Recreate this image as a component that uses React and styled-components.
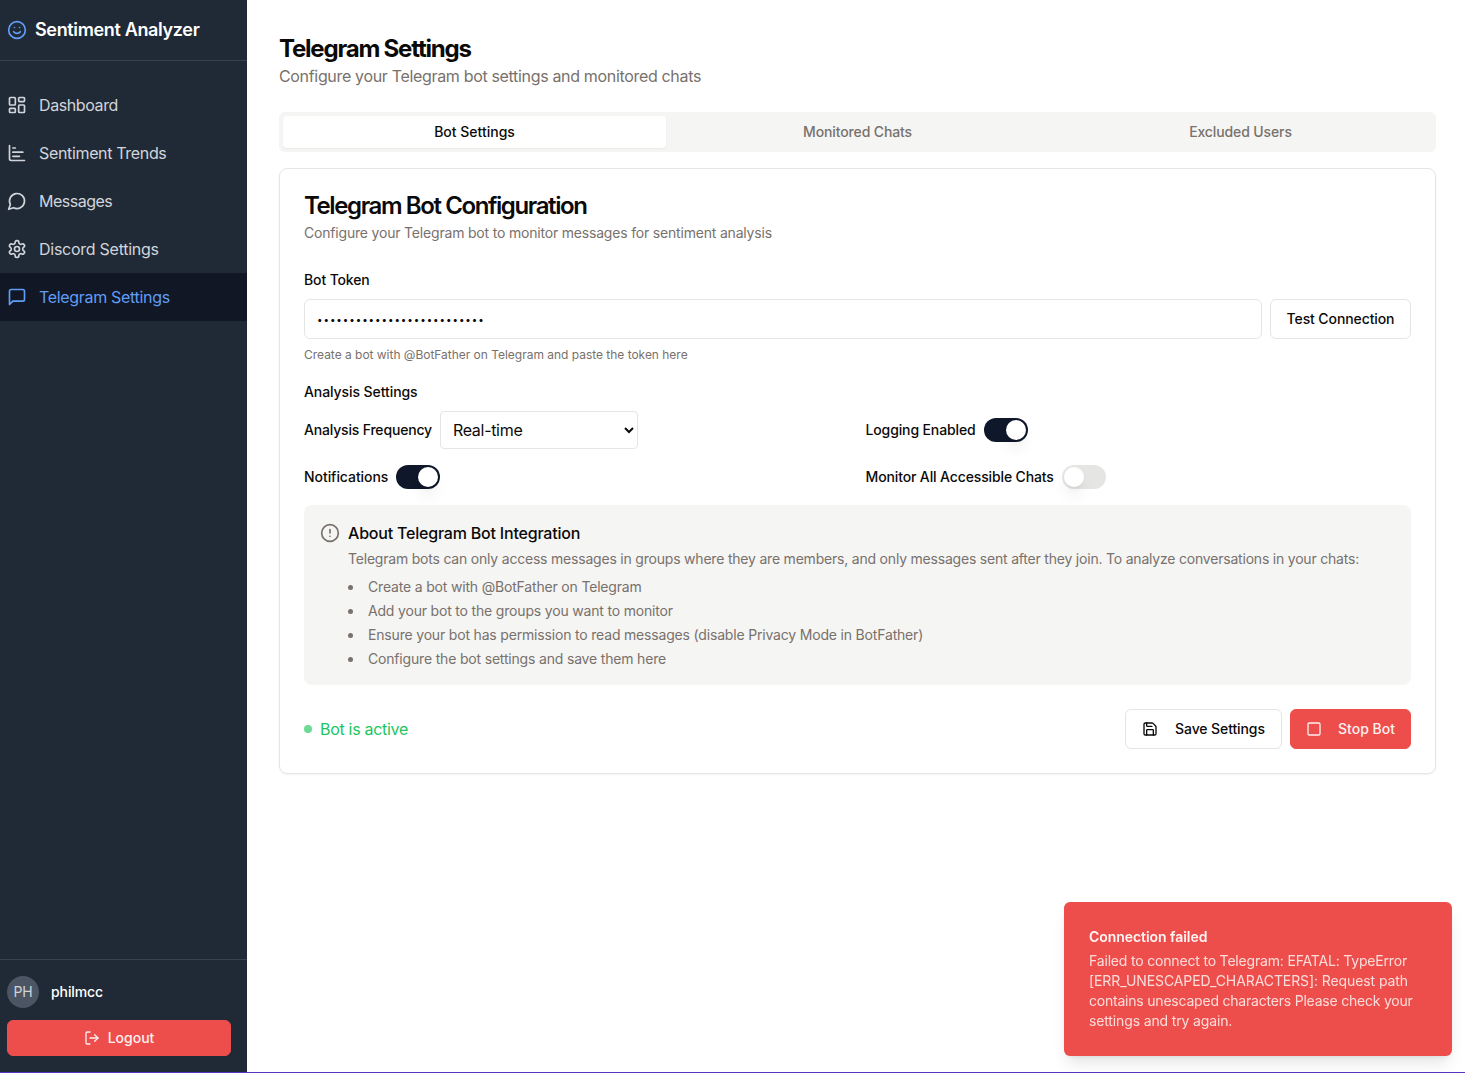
import React, { useState } from "react";
import styled, { createGlobalStyle, css } from "styled-components";
import {
  Smile,
  LayoutDashboard,
  LogOut,
  CircleAlert,
  Save,
  Square,
} from "lucide-react";

const Global = createGlobalStyle`
  *, *::before, *::after { box-sizing: border-box; }
  body {
    margin: 0;
    background: #fff;
    color: #0c0a09;
    font: 400 16px/24px Inter, "Liberation Sans", sans-serif;
  }
  h1, h2, h4, p, ul { margin: 0; padding: 0; }
  button, input, select { font: inherit; color: inherit; }
`;

const Shell = styled.div`
  display: flex;
  height: 1073px;
  overflow: hidden;
  border-bottom: 1px solid #5a35c4;
`;

const Sidebar = styled.aside`
  display: flex;
  flex-direction: column;
  flex: 0 0 247px;
  background: #202a36;
  color: #fff;
`;

const Brand = styled.div`
  display: flex;
  align-items: center;
  gap: 8px;
  height: 61px;
  padding-left: 7px;
  border-bottom: 1px solid #38424f;
  font-size: 18px;
  font-weight: 600;
  letter-spacing: -0.35px;
  white-space: nowrap;
  svg { color: #609df5; }
`;

const Nav = styled.nav`
  flex: 1;
  padding-top: 20px;
`;

const NavItem = styled.a`
  display: flex;
  align-items: center;
  gap: 12px;
  height: 48px;
  padding-left: 7px;
  letter-spacing: ${(p) => p.$tracking}px;
  color: ${(p) => (p.$active ? "#609df5" : "#d1d5db")};
  background: ${(p) => (p.$active ? "#111725" : "transparent")};
`;

const Account = styled.div`
  display: flex;
  flex-direction: column;
  gap: 12px;
  padding: 16px 16px 16px 7px;
  border-top: 1px solid #38424f;
`;

const User = styled.div`
  display: flex;
  align-items: center;
  gap: 12px;
  font-size: 14px;
  font-weight: 500;
  letter-spacing: -0.1px;
`;

const Avatar = styled.span`
  display: grid;
  place-items: center;
  width: 32px;
  height: 32px;
  border-radius: 50%;
  background: #4b5563;
  color: #d1d5db;
  font-weight: 400;
`;

const Button = styled.button`
  display: inline-flex;
  align-items: center;
  justify-content: center;
  flex: none;
  gap: ${(p) => p.$gap || 16}px;
  width: ${(p) => (p.$width ? `${p.$width}px` : "100%")};
  height: ${(p) => p.$height || 40}px;
  padding: 0;
  border: 1px solid #e5e5e4;
  border-radius: 6px;
  background: #fff;
  font-size: 14px;
  line-height: 20px;
  font-weight: 500;
  letter-spacing: -0.1px;
  white-space: nowrap;
  ${(p) =>
    p.$danger &&
    css`
      border-color: #ed4e4b;
      background: #ed4e4b;
      color: #fdf0ef;
      letter-spacing: 0;
    `}
`;

const Main = styled.main`
  flex: 1;
  min-width: 0;
  padding: 33px 29px 0 32px;
`;

const PageTitle = styled.h1`
  font-size: 24px;
  line-height: 32px;
  font-weight: 700;
  letter-spacing: -1.2px;
`;

const PageText = styled.p`
  margin-top: -1px;
  color: #78716c;
  letter-spacing: -0.33px;
`;

const Tabs = styled.div`
  display: grid;
  grid-template-columns: repeat(3, 1fr);
  height: 40px;
  margin: 24px 0 16px;
  padding: 4px;
  border-radius: 6px;
  background: #f5f5f4;
`;

const Tab = styled.button`
  border: 0;
  border-radius: 4px;
  padding: 0;
  font-size: 14px;
  line-height: 20px;
  font-weight: 500;
  letter-spacing: ${(p) => (p.$active ? 0 : -0.12)}px;
  color: ${(p) => (p.$active ? "#0c0a09" : "#78716c")};
  background: ${(p) => (p.$active ? "#fff" : "transparent")};
  box-shadow: ${(p) => (p.$active ? "0 1px 2px rgba(0, 0, 0, 0.05)" : "none")};
`;

const Card = styled.section`
  padding: 25px 24px 24px;
  border: 1px solid #e5e5e4;
  border-radius: 8px;
  box-shadow: 0 1px 2px rgba(0, 0, 0, 0.05);
`;

const CardTitle = styled.h2`
  font-size: 24px;
  line-height: 24px;
  font-weight: 600;
  letter-spacing: -1.4px;
`;

const CardText = styled.p`
  margin: 5px 0 24px;
  font-size: 14px;
  line-height: 20px;
  letter-spacing: -0.19px;
  color: #78716c;
`;

const Label = styled.label`
  font-size: 14px;
  line-height: 24px;
  font-weight: 500;
  letter-spacing: ${(p) => p.$tracking ?? -0.13}px;
  white-space: nowrap;
`;

const FieldLabel = styled(Label)`
  padding-top: 1px;
  margin-bottom: -1px;
`;

const Field = styled.div`
  display: flex;
  flex-direction: column;
  gap: 8px;
  margin-bottom: 16px;
`;

const TokenRow = styled.div`
  display: flex;
  gap: 8px;
`;

const TokenInput = styled.input`
  flex: 1;
  min-width: 0;
  height: 40px;
  padding: 1px 12px;
  border: 1px solid #e5e5e4;
  border-radius: 6px;
  background: #fff;
  font-size: 9.8px;
  letter-spacing: 0.94px;
  outline: none;
`;

const Hint = styled.p`
  font-size: 12px;
  line-height: 16px;
  letter-spacing: -0.02px;
  color: #78716c;
`;

const Options = styled.div`
  display: grid;
  grid-template-columns: 1fr 1fr;
  gap: 16px;
`;

const Option = styled.div`
  display: flex;
  align-items: center;
  gap: 8px;
`;

const Select = styled.select`
  width: 198px;
  height: 38px;
  padding: 0 8px;
  border: 1px solid #e5e5e4;
  border-radius: 4px;
  background: #fff;
  letter-spacing: -0.3px;
`;

const Switch = styled.button`
  display: flex;
  flex: none;
  justify-content: ${(p) => (p.$on ? "flex-end" : "flex-start")};
  width: 44px;
  height: 24px;
  padding: 2px;
  border: 0;
  border-radius: 12px;
  background: ${(p) => (p.$on ? "#0f172a" : "#e5e5e4")};
  &::before {
    content: "";
    width: 20px;
    height: 20px;
    border-radius: 50%;
    background: #fff;
    box-shadow: 0 10px 15px -3px rgba(0, 0, 0, 0.1), 0 4px 6px -4px rgba(0, 0, 0, 0.1);
  }
`;

const Info = styled.div`
  display: flex;
  gap: 8px;
  padding: 16px;
  border-radius: 8px;
  background: #f5f5f4;
  font-size: 14px;
  line-height: 20px;
  letter-spacing: -0.205px;
  color: #78716c;
  > svg { flex: none; margin-top: 2px; }
`;

const InfoTitle = styled.h4`
  margin-bottom: 4px;
  font-size: 16px;
  line-height: 24px;
  font-weight: 500;
  color: #0c0a09;
`;

const Steps = styled.ul`
  display: flex;
  flex-direction: column;
  gap: 4px;
  margin-top: 8px;
  letter-spacing: -0.18px;
`;

const Step = styled.li`
  display: flex;
  align-items: center;
  gap: 15px;
  &::before {
    content: "";
    width: 5px;
    height: 5px;
    margin-top: 1px;
    border-radius: 50%;
    background: currentColor;
  }
`;

const Actions = styled.div`
  display: flex;
  align-items: center;
  gap: 8px;
  margin-top: 24px;
`;

const Status = styled.span`
  display: flex;
  align-items: center;
  gap: 8px;
  margin-right: auto;
  letter-spacing: -0.3px;
  color: #22c55e;
  &::before {
    content: "";
    width: 8px;
    height: 8px;
    border-radius: 50%;
    background: #6bdb95;
  }
`;

const Toast = styled.div`
  position: fixed;
  right: 13px;
  bottom: 17px;
  width: 388px;
  padding: 25px;
  border-radius: 6px;
  background: #ed4e4b;
  box-shadow: 0 10px 15px -3px rgba(0, 0, 0, 0.1), 0 4px 6px -4px rgba(0, 0, 0, 0.1);
  font-size: 14px;
  line-height: 20px;
  color: #fbdcda;
`;

const ToastTitle = styled.div`
  margin-bottom: 4px;
  font-weight: 600;
  letter-spacing: -0.05px;
  color: #fdf5f4;
`;

const ToastLine = styled.div`
  letter-spacing: ${(p) => p.$tracking}px;
  white-space: nowrap;
`;

const NavSvg = ({ children }) => (
  <svg width="20" height="20" viewBox="0 0 24 24" fill="none" stroke="currentColor" strokeWidth="2" strokeLinecap="round" strokeLinejoin="round">
    {children}
  </svg>
);

const TrendsIcon = () => (
  <NavSvg>
    <path d="M3 3v16a2 2 0 0 0 2 2h16" />
    <path d="M7 6h3M7 11h12M7 16h8" />
  </NavSvg>
);

const ChatIcon = () => (
  <NavSvg><path d="M7.9 20A9 9 0 1 0 4 16.1L2 22Z" /></NavSvg>
);

const GearIcon = () => (
  <NavSvg>
    <path d="M12.22 2h-.44a2 2 0 0 0-2 2v.18a2 2 0 0 1-1 1.73l-.43.25a2 2 0 0 1-2 0l-.15-.08a2 2 0 0 0-2.73.73l-.22.38a2 2 0 0 0 .73 2.73l.15.1a2 2 0 0 1 1 1.72v.51a2 2 0 0 1-1 1.74l-.15.09a2 2 0 0 0-.73 2.73l.22.38a2 2 0 0 0 2.73.73l.15-.08a2 2 0 0 1 2 0l.43.25a2 2 0 0 1 1 1.73V20a2 2 0 0 0 2 2h.44a2 2 0 0 0 2-2v-.18a2 2 0 0 1 1-1.73l.43-.25a2 2 0 0 1 2 0l.15.08a2 2 0 0 0 2.73-.73l.22-.39a2 2 0 0 0-.73-2.73l-.15-.08a2 2 0 0 1-1-1.74v-.5a2 2 0 0 1 1-1.74l.15-.09a2 2 0 0 0 .73-2.73l-.22-.38a2 2 0 0 0-2.73-.73l-.15.08a2 2 0 0 1-2 0l-.43-.25a2 2 0 0 1-1-1.73V4a2 2 0 0 0-2-2z" />
    <circle cx="12" cy="12" r="3" />
  </NavSvg>
);

const BubbleIcon = () => (
  <NavSvg><path d="M21 15a2 2 0 0 1-2 2H7l-4 4V5a2 2 0 0 1 2-2h14a2 2 0 0 1 2 2z" /></NavSvg>
);

const links = [
  ["Dashboard", LayoutDashboard, -0.4],
  ["Sentiment Trends", TrendsIcon, -0.34],
  ["Messages", ChatIcon, -0.5],
  ["Discord Settings", GearIcon, -0.26],
  ["Telegram Settings", BubbleIcon, -0.32],
];

const steps = [
  "Create a bot with @BotFather on Telegram",
  "Add your bot to the groups you want to monitor",
  "Ensure your bot has permission to read messages (disable Privacy Mode in BotFather)",
  "Configure the bot settings and save them here",
];

const toastLines = [
  ["Failed to connect to Telegram: EFATAL: TypeError", -0.18],
  ["[ERR_UNESCAPED_CHARACTERS]: Request path", -0.09],
  ["contains unescaped characters Please check your", -0.21],
  ["settings and try again.", -0.14],
];

function Toggle({ label, initial, tracking }) {
  const [on, setOn] = useState(initial);
  return (
    <Option>
      <Label $tracking={tracking}>{label}</Label>
      <Switch $on={on} role="switch" aria-checked={on} onClick={() => setOn(!on)} />
    </Option>
  );
}

export default function App() {
  const [tab, setTab] = useState("Bot Settings");
  return (
    <>
      <Global />
      <Shell>
        <Sidebar>
          <Brand><Smile size={20} />Sentiment Analyzer</Brand>
          <Nav>
            {links.map(([name, Icon, tracking]) => (
              <NavItem key={name} $active={name === "Telegram Settings"} $tracking={tracking}>
                <Icon size={20} />{name}
              </NavItem>
            ))}
          </Nav>
          <Account>
            <User><Avatar>PH</Avatar>philmcc</User>
            <Button $danger $height={36} $gap={8}><LogOut size={16} />Logout</Button>
          </Account>
        </Sidebar>
        <Main>
          <PageTitle>Telegram Settings</PageTitle>
          <PageText>Configure your Telegram bot settings and monitored chats</PageText>
          <Tabs>
            {["Bot Settings", "Monitored Chats", "Excluded Users"].map((name) => (
              <Tab key={name} $active={name === tab} onClick={() => setTab(name)}>{name}</Tab>
            ))}
          </Tabs>
          <Card>
            <CardTitle>Telegram Bot Configuration</CardTitle>
            <CardText>Configure your Telegram bot to monitor messages for sentiment analysis</CardText>
            <Field>
              <FieldLabel>Bot Token</FieldLabel>
              <TokenRow>
                <TokenInput type="password" defaultValue="abcdefghijklmnopqrstuvwxyz" />
                <Button $width={141}>Test Connection</Button>
              </TokenRow>
              <Hint>Create a bot with @BotFather on Telegram and paste the token here</Hint>
            </Field>
            <Field>
              <FieldLabel $tracking={-0.08}>Analysis Settings</FieldLabel>
              <Options>
                <Option>
                  <Label $tracking={-0.18}>Analysis Frequency</Label>
                  <Select defaultValue="Real-time"><option>Real-time</option></Select>
                </Option>
                <Toggle label="Logging Enabled" initial />
                <Toggle label="Notifications" initial tracking={-0.06} />
                <Toggle label="Monitor All Accessible Chats" initial={false} />
              </Options>
            </Field>
            <Info>
              <CircleAlert size={20} />
              <div>
                <InfoTitle>About Telegram Bot Integration</InfoTitle>
                <p>Telegram bots can only access messages in groups where they are members, and only messages sent after they join. To analyze conversations in your chats:</p>
                <Steps>{steps.map((s) => <Step key={s}>{s}</Step>)}</Steps>
              </div>
            </Info>
            <Actions>
              <Status>Bot is active</Status>
              <Button $width={157} $gap={17}><Save size={16} />Save Settings</Button>
              <Button $danger $width={121}><Square size={16} />Stop Bot</Button>
            </Actions>
          </Card>
        </Main>
      </Shell>
      <Toast role="alert">
        <ToastTitle>Connection failed</ToastTitle>
        {toastLines.map(([line, tracking]) => (
          <ToastLine key={line} $tracking={tracking}>{line}</ToastLine>
        ))}
      </Toast>
    </>
  );
}
